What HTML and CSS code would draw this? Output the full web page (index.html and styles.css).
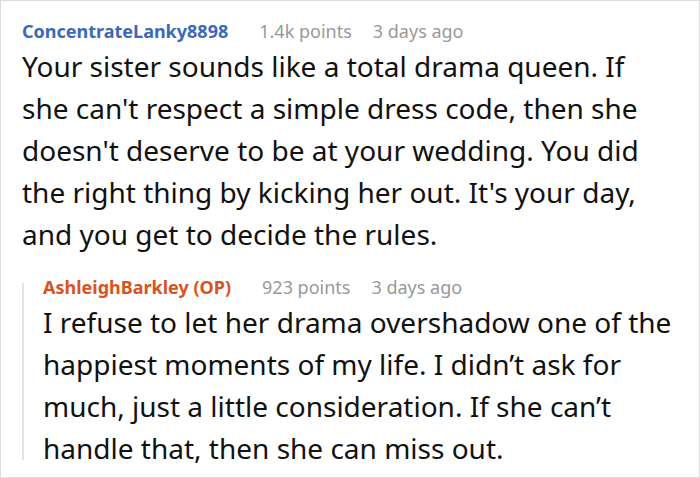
FILE: index.html
```html
<!DOCTYPE html>
<html>
<head>
<meta charset="utf-8">
<link rel="stylesheet" href="styles.css">
</head>
<body>
<div class="thread">
  <div class="comment">
    <div class="meta">
      <span class="user">ConcentrateLanky8898</span>
      <span class="info">1.4k points</span>
      <span class="info">3 days ago</span>
    </div>
    <p class="text">Your sister sounds like a total drama queen. If she can't respect a simple dress code, then she doesn't deserve to be at your wedding. You did the right thing by kicking her out. It's your day, and you get to decide the rules.</p>
    <div class="reply">
      <div class="rule"></div>
      <div class="reply-body">
        <div class="meta">
          <span class="user op">AshleighBarkley (OP)</span>
          <span class="info">923 points</span>
          <span class="info">3 days ago</span>
        </div>
        <p class="text">I refuse to let her drama overshadow one of the happiest moments of my life. I didn’t ask for much, just a little consideration. If she can’t handle that, then she can miss out.</p>
      </div>
    </div>
  </div>
</div>
</body>
</html>
```
FILE: styles.css
```css
html, body {
  margin: 0;
  padding: 0;
  background: #fff;
}
.thread {
  width: 700px;
  height: 478px;
  box-sizing: border-box;
  border: 1px solid #dcdcdc;
  font-family: "Noto Sans", "Open Sans", sans-serif;
  color: #111;
}
.comment {
  padding: 16px 21px 0 21px;
}
.meta {
  display: flex;
  gap: 21px;
  font-size: 18px;
  line-height: 28px;
}
.user {
  font-weight: 700;
  color: #3a6ab8;
  margin-right: 10px;
}
.user.op {
  color: #d9531e;
}
.info {
  color: #999;
}
.text {
  margin: 0;
  font-size: 28px;
  line-height: 42px;
}
.reply {
  display: flex;
  margin-top: 18px;
}
.rule {
  width: 2px;
  flex: none;
  background: #e4e4e4;
  margin: 10px 0 9px 0;
}
.reply-body {
  padding-left: 19px;
}
```
